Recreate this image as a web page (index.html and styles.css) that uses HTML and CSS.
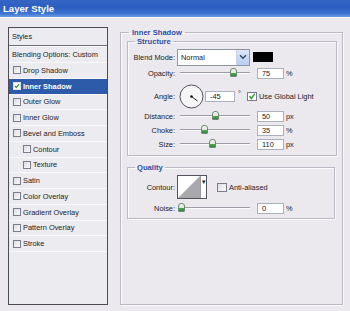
FILE: index.html
```html
<!DOCTYPE html>
<html>
	<head>
		<meta charset="utf-8" />
		<title>Layer Style</title>
		<link rel="stylesheet" href="styles.css">
	</head>
	<body>
		<div class="window">
			<!-- title -->
			<div class="titlebar">Layer Style</div>
			<div class="content">
				<!-- styles list -->
				<div class="styles">
					<div class="styles-head">Styles</div>
					<div class="item blend">Blending Options: Custom</div>
					<div class="item"><span class="box"></span>Drop Shadow</div>
					<div class="item active"><span class="box"><svg width="8" height="8" viewBox="0 0 8 8"><path d="M1.3 3.8 L3.2 6 L6.8 1.4" fill="none" stroke="#2b9a2b" stroke-width="1.6"/></svg></span>Inner Shadow</div>
					<div class="item"><span class="box"></span>Outer Glow</div>
					<div class="item"><span class="box"></span>Inner Glow</div>
					<div class="item"><span class="box"></span>Bevel and Emboss</div>
					<div class="item sub"><span class="box"></span>Contour</div>
					<div class="item sub"><span class="box"></span>Texture</div>
					<div class="item"><span class="box"></span>Satin</div>
					<div class="item"><span class="box"></span>Color Overlay</div>
					<div class="item"><span class="box"></span>Gradient Overlay</div>
					<div class="item"><span class="box"></span>Pattern Overlay</div>
					<div class="item"><span class="box"></span>Stroke</div>
				</div>
				<!-- styles list end -->
				<fieldset class="group main">
					<legend>Inner Shadow</legend>
					<fieldset class="group structure">
						<legend>Structure</legend>
						<div class="row blend-row">
							<span class="label">Blend Mode:</span>
							<div class="select">
								<span class="select-text">Normal</span>
								<span class="select-btn"><svg width="8" height="6" viewBox="0 0 8 6"><path d="M1 1.2 L4 4.2 L7 1.2" fill="none" stroke="#3a4a6a" stroke-width="1.5"/></svg></span>
							</div>
							<span class="swatch"></span>
						</div>
						<div class="row">
							<span class="label">Opacity:</span>
							<div class="slider"><span class="thumb" style="left:52px"></span></div>
							<span class="field">75</span><span class="unit">%</span>
						</div>
						<div class="row angle-row">
							<span class="label">Angle:</span>
							<svg class="dial" width="25" height="25" viewBox="0 0 25 25">
								<circle cx="12.5" cy="12.5" r="11.5" fill="#f6f5f8" stroke="#4e5064" stroke-width="1"/>
								<line x1="12.5" y1="12.5" x2="18.5" y2="17" stroke="#222" stroke-width="1"/>
								<circle cx="12.5" cy="12.5" r="1.3" fill="#111"/>
							</svg>
							<span class="field angle">-45</span><span class="unit deg">°</span>
							<span class="check"><svg width="9" height="9" viewBox="0 0 9 9"><path d="M1.6 4.3 L3.7 6.8 L7.6 1.6" fill="none" stroke="#2b9a2b" stroke-width="1.6"/></svg></span>
							<span class="check-label">Use Global Light</span>
						</div>
						<div class="row">
							<span class="label">Distance:</span>
							<div class="slider"><span class="thumb" style="left:34px"></span></div>
							<span class="field">50</span><span class="unit">px</span>
						</div>
						<div class="row">
							<span class="label">Choke:</span>
							<div class="slider"><span class="thumb" style="left:23px"></span></div>
							<span class="field">35</span><span class="unit">%</span>
						</div>
						<div class="row">
							<span class="label">Size:</span>
							<div class="slider"><span class="thumb" style="left:31px"></span></div>
							<span class="field">110</span><span class="unit">px</span>
						</div>
					</fieldset>
					<fieldset class="group quality">
						<legend>Quality</legend>
						<div class="row contour-row">
							<span class="label">Contour:</span>
							<div class="contour">
								<svg width="22" height="22" viewBox="0 0 22 22"><rect width="22" height="22" fill="#fff"/><path d="M0 22 L22 0 L22 22 Z" fill="#a9a9ad"/></svg>
								<span class="contour-btn">▾</span>
							</div>
							<span class="check empty"></span>
							<span class="check-label">Anti-aliased</span>
						</div>
						<div class="row">
							<span class="label">Noise:</span>
							<div class="slider"><span class="thumb" style="left:0px"></span></div>
							<span class="field">0</span><span class="unit">%</span>
						</div>
					</fieldset>
				</fieldset>
			</div>
		</div>
	</body>
</html>
```

FILE: styles.css
```css
html,
body
{
	margin: 0;
	padding: 0;
	background: #ebe8ee;
}
.window
{
	width: 350px;
	height: 311px;
	overflow: hidden;
	font-family: "Liberation Sans", Arial, sans-serif;
	font-size: 7.4px;
	color: #1c1c22;
}
/* title bar */
.titlebar
{
	height: 18px;
	line-height: 17px;
	padding-left: 3px;
	box-sizing: border-box;
	color: #fff;
	font-weight: bold;
	font-size: 9.6px;
	background: linear-gradient(to bottom, #3466c4 0%, #2a5ec0 45%, #3f76d4 80%, #6e9ee2 100%);
	border-bottom: 1px solid #f6f4f8;
}
.content
{
	display: flex;
	align-items: flex-start;
	padding: 9px 0 0 8px;
}
/* styles list */
.styles
{
	width: 100px;
	height: 278px;
	box-sizing: border-box;
	border: 1px solid #4c4c55;
	background: #ecebf0;
}
.styles-head
{
	height: 18px;
	line-height: 17px;
	padding-left: 3px;
	box-sizing: border-box;
	border-bottom: 1px solid #6e6e78;
}
.item
{
	height: 15.75px;
	box-sizing: border-box;
	display: flex;
	align-items: center;
	padding-left: 4px;
	border-bottom: 1px solid #f8f7fa;
}
.item.blend
{
	height: 17px;
	padding-left: 3px;
	border-top: 1px solid #f8f7fa;
}
.item.sub
{
	padding-left: 14px;
}
.item.active
{
	background: #2d5aa9;
	color: #fff;
	font-weight: bold;
}
.box
{
	width: 8px;
	height: 8px;
	box-sizing: border-box;
	border: 1px solid #7c7c8c;
	background: linear-gradient(135deg, #dcdce4, #fbfbfd);
	margin-right: 2px;
	display: flex;
	align-items: center;
	justify-content: center;
	flex: none;
}
.item.active .box
{
	background: #fff;
	border-color: #e0e0e8;
}
.box svg
{
	display: block;
}
/* group boxes */
.group
{
	margin: 0;
	padding: 0;
	border: 1px solid #bab8c2;
	box-shadow: inset 1px 1px 0 #fbfafc, 1px 1px 0 #fbfafc;
	min-width: 0;
}
.group legend
{
	color: #2c4fa0;
	font-weight: bold;
	font-size: 7.6px;
	line-height: 9px;
	padding: 0 2px;
	margin-left: 3px;
}
.main
{
	width: 223px;
	height: 277px;
	box-sizing: border-box;
	margin: 1px 0 0 12px;
	padding: 0 5px 0 6px;
}
.main > legend
{
	padding: 0 3px;
	margin-left: 2px;
}
.structure
{
	width: 210px;
	box-sizing: border-box;
	padding: 2px 0 4px 0;
}
.structure legend,
.quality legend
{
	margin-left: 7px;
}
.quality
{
	width: 208px;
	box-sizing: border-box;
	margin-top: 7px;
	padding: 1px 0 3px 0;
}
/* rows */
.row
{
	display: flex;
	align-items: center;
	height: 14px;
}
.label
{
	width: 47px;
	text-align: right;
	margin-right: 3px;
	flex: none;
}
.blend-row
{
	height: 18px;
}
.angle-row
{
	height: 29px;
	padding-top: 3px;
	box-sizing: border-box;
}
.contour-row
{
	height: 28px;
}
.select
{
	width: 73px;
	height: 17px;
	box-sizing: border-box;
	border: 1px solid #8e96a6;
	background: #fff;
	display: flex;
	align-items: stretch;
	margin-left: -1px;
}
.select-text
{
	flex: 1;
	padding-left: 3px;
	line-height: 15px;
}
.select-btn
{
	width: 12px;
	background: linear-gradient(to bottom, #dbe6f8, #b9cdef);
	border-left: 1px solid #c6d2e8;
	display: flex;
	align-items: center;
	justify-content: center;
}
.swatch
{
	width: 20px;
	height: 10px;
	background: #000;
	margin-left: 3px;
}
.slider
{
	position: relative;
	width: 72px;
	height: 10px;
	flex: none;
}
.slider::before
{
	content: '';
	position: absolute;
	left: 2px;
	right: 0;
	top: 4px;
	height: 1px;
	background: #9c9ca6;
	box-shadow: 0 1px 0 #fbfbfd;
}
.thumb
{
	position: absolute;
	top: 0;
	width: 7px;
	height: 9px;
	box-sizing: border-box;
	background: linear-gradient(to bottom, #f2f4ee 0%, #dfe6d8 60%, #4ea84e 61%, #2f8a3a 100%);
	border: 1px solid #6f8a74;
	border-radius: 3px 3px 1px 1px;
}
.field
{
	width: 27px;
	height: 11px;
	box-sizing: border-box;
	border: 1px solid #aab0bc;
	background: #fff;
	padding-left: 4px;
	line-height: 9px;
	margin-left: 7px;
	flex: none;
}
.unit
{
	margin-left: 2px;
}
.dial
{
	margin-left: 1px;
	flex: none;
}
.field.angle
{
	width: 30px;
	margin-left: 1px;
}
.unit.deg
{
	margin-left: 3px;
	align-self: flex-start;
	margin-top: 6px;
}
.check
{
	width: 10px;
	height: 9px;
	box-sizing: border-box;
	border: 1px solid #7c7c8c;
	background: #fff;
	margin-left: 6px;
	margin-right: 2px;
	display: flex;
	align-items: center;
	justify-content: center;
}
.check.empty
{
	margin-left: 10px;
	background: linear-gradient(135deg, #dcdce4, #fbfbfd);
}
.contour
{
	width: 30px;
	height: 24px;
	box-sizing: border-box;
	border: 1px solid #55555f;
	background: #fff;
	display: flex;
	margin-left: -1px;
}
.contour svg
{
	display: block;
}
.contour-btn
{
	flex: 1;
	border-left: 1px solid #9a9aa4;
	font-size: 7px;
	line-height: 12px;
	text-align: center;
}
```
